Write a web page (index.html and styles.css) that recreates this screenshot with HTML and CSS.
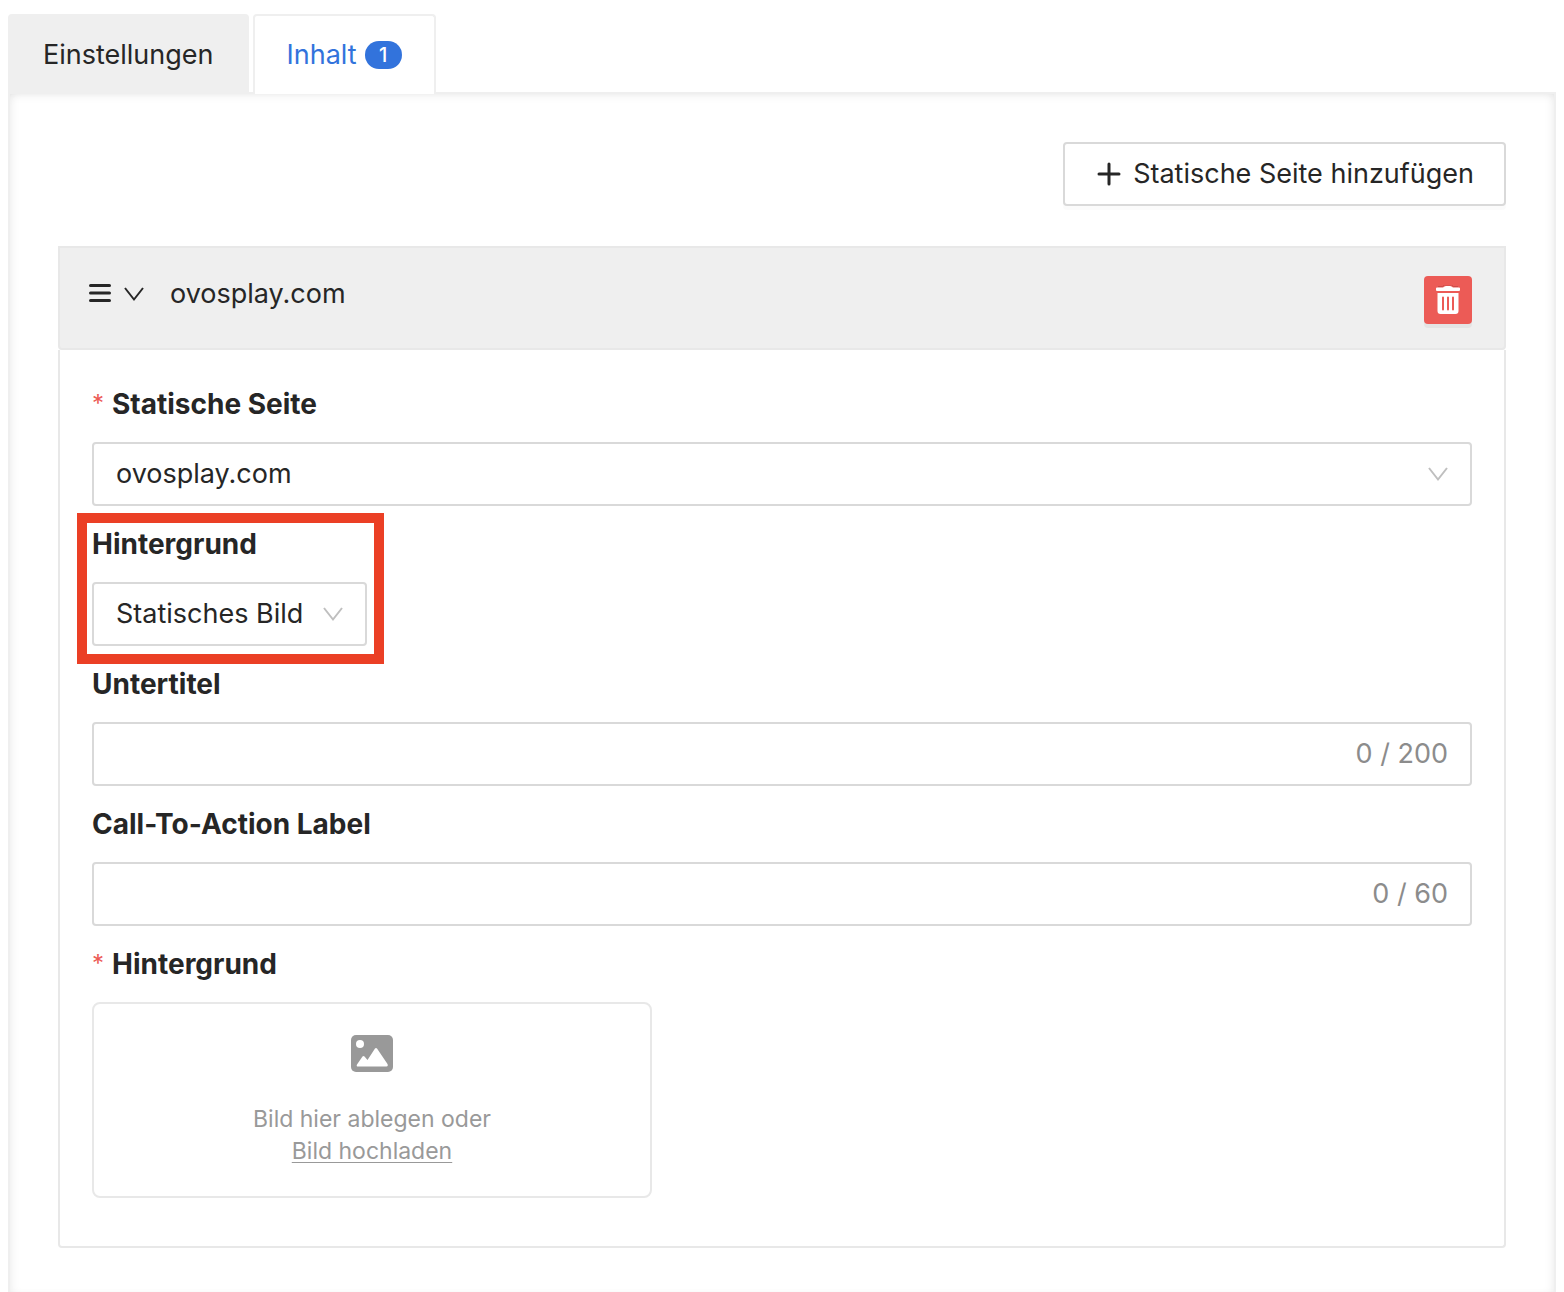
FILE: index.html
```html
<!DOCTYPE html>
<html lang="de">
<head>
  <meta charset="utf-8">
  <meta name="viewport" content="width=device-width, initial-scale=1">
  <title>Inhalt</title>
  <link rel="stylesheet" href="styles.css">
</head>
<body>
  <div class="tabs" role="tablist">
    <button class="tab" type="button" role="tab" aria-selected="false">Einstellungen</button>
    <button class="tab tab-active" type="button" role="tab" aria-selected="true">Inhalt <span class="count">1</span></button>
  </div>

  <main class="panel">
    <div class="toolbar">
      <button class="add-button" type="button">
        <svg class="icon-plus" viewBox="0 0 24 24" aria-hidden="true"><path d="M12 2v20M2 12h20"/></svg>
        Statische Seite hinzufügen
      </button>
    </div>

    <section class="card">
      <header class="card-header">
        <button class="icon-button" type="button" aria-label="Verschieben">
          <svg class="icon-menu" viewBox="0 0 24 24" aria-hidden="true"><path d="M2.500 3.500h19M2.500 11h19M2.500 18.500h19"/></svg>
        </button>
        <button class="icon-button" type="button" aria-label="Einklappen">
          <svg class="icon-chevron" viewBox="0 0 20 20" aria-hidden="true"><path d="M1 4l9 11.500L19 4"/></svg>
        </button>
        <span class="card-title">ovosplay.com</span>
        <button class="delete-button" type="button" aria-label="Löschen">
          <svg class="icon-trash" viewBox="0 0 24 30" aria-hidden="true">
            <path class="lid-shade" d="M2 1.500h4.500L8.500 0h7l2 1.500H22"/>
            <path fill="#fff" d="M1 2.500h6l1.500-1Q9 1 10 1h4q1 0 1.500.5l1.500 1h6q1 0 1 1V5q0 1-1 1H1Q0 6 0 5V3.500q0-1 1-1zM1.500 8h21v18q0 3-3 3h-15q-3 0-3-3z"/>
            <path class="slots" d="M7 12.500v12M12 12.500v12M17 12.500v12"/>
          </svg>
        </button>
      </header>

      <form class="card-body">
        <div class="field">
          <label class="label required" for="page">Statische Seite</label>
          <div class="select">
            <select class="control" id="page"><option>ovosplay.com</option></select>
            <svg class="icon-chevron select-arrow" viewBox="0 0 20 20" aria-hidden="true"><path d="M1 4l9 11.500L19 4"/></svg>
          </div>
        </div>

        <div class="field field-highlight">
          <label class="label" for="background-type">Hintergrund</label>
          <div class="select">
            <select class="control" id="background-type"><option>Statisches Bild</option></select>
            <svg class="icon-chevron select-arrow" viewBox="0 0 20 20" aria-hidden="true"><path d="M1 4l9 11.500L19 4"/></svg>
          </div>
        </div>

        <div class="field">
          <label class="label" for="subtitle">Untertitel</label>
          <div class="control text-control">
            <input class="text-input" id="subtitle" type="text" maxlength="200">
            <span class="counter">0 / 200</span>
          </div>
        </div>

        <div class="field">
          <label class="label" for="cta">Call-To-Action Label</label>
          <div class="control text-control">
            <input class="text-input" id="cta" type="text" maxlength="60">
            <span class="counter">0 / 60</span>
          </div>
        </div>

        <div class="field">
          <span class="label required">Hintergrund</span>
          <div class="dropzone">
            <svg class="icon-image" viewBox="0 0 42 37" aria-hidden="true">
              <rect width="42" height="37" rx="5" fill="#999"/>
              <circle cx="9" cy="9" r="4" fill="#fff"/>
              <path fill="#fff" d="M6 29.500l5.500-8q1-1 2 0l3 3.500 7.500-11.500q1-1 2 0L36.500 29q.8 2.500-1 2.500H7q-2 0-1-2z"/>
            </svg>
            <p class="dropzone-text">Bild hier ablegen oder<br><a class="upload-link" href="#">Bild hochladen</a></p>
          </div>
        </div>
      </form>
    </section>
  </main>
</body>
</html>
```

FILE: styles.css
```css
* {
  box-sizing: border-box;
}

body {
  display: flex;
  flex-direction: column;
  min-height: 100vh;
  margin: 0;
  padding: 14px 8px 0;
  background: #fff;
  color: #262626;
  font: 27px/44px Inter, "Liberation Sans", sans-serif;
}

button,
input,
select {
  margin: 0;
  color: inherit;
  font: inherit;
}

/* Tabs */

.tabs {
  display: flex;
  gap: 4px;
}

.tab {
  height: 80px;
  margin-bottom: -2px;
  padding: 0 33px;
  border: 2px solid #efefef;
  border-bottom: 0;
  border-radius: 4px 4px 0 0;
  background: #efefef;
}

.tab-active {
  z-index: 1;
  display: flex;
  align-items: center;
  gap: 8px;
  padding: 0 32px;
  background: #fff;
  color: #3273dc;
}

.count {
  width: 37px;
  border-radius: 14px;
  background: #3273dc;
  color: #fff;
  font-size: 20px;
  font-weight: 500;
  line-height: 28px;
  text-align: center;
}

/* Panel */

.panel {
  flex: 1;
  padding: 48px 48px 42px;
  border: 2px solid #efefef;
  border-bottom: 0;
  box-shadow: inset 0 6px 10px -4px rgba(0, 0, 0, 0.06), inset 6px 0 10px -4px rgba(0, 0, 0, 0.06), inset -6px 0 10px -4px rgba(0, 0, 0, 0.06);
}

.toolbar {
  display: flex;
  justify-content: flex-end;
  margin-bottom: 40px;
}

.add-button {
  display: flex;
  align-items: center;
  gap: 12px;
  height: 64px;
  padding: 0 30px 0 32px;
  border: 2px solid #d9d9d9;
  border-radius: 4px;
  background: #fff;
  box-shadow: 0 4px 0 rgba(0, 0, 0, 0.016);
}

.icon-plus {
  width: 24px;
  height: 24px;
  fill: none;
  stroke: currentColor;
  stroke-width: 3;
  stroke-linecap: round;
}

/* Card */

.card-header {
  display: flex;
  align-items: flex-start;
  height: 104px;
  padding: 24px 32px 24px 28px;
  border: 2px solid #e8e8e8;
  border-radius: 0 0 4px 4px;
  background: #efefef;
}

.icon-button {
  display: flex;
  align-items: center;
  height: 44px;
  margin-right: 12px;
  padding: 0;
  border: 0;
  background: none;
}

.icon-menu {
  width: 24px;
  height: 24px;
  fill: none;
  stroke: currentColor;
  stroke-width: 3;
  stroke-linecap: round;
}

.icon-chevron {
  width: 20px;
  height: 20px;
  fill: none;
  stroke: currentColor;
  stroke-width: 2;
}

.card-title {
  flex: 1;
  margin-left: 14px;
}

.delete-button {
  display: grid;
  place-items: center;
  width: 48px;
  height: 48px;
  margin-top: 4px;
  padding: 0;
  border: 0;
  border-radius: 4px;
  background: #ec5b56;
  box-shadow: 0 4px 0 rgba(0, 0, 0, 0.045);
}

.icon-trash {
  width: 24px;
  height: 30px;
}

.lid-shade {
  fill: none;
  stroke: #c94d49;
  stroke-width: 1;
}

.slots {
  fill: none;
  stroke: #ec5b56;
  stroke-width: 2;
  stroke-linecap: round;
}

.card-body {
  padding: 16px 32px 48px;
  border: 2px solid #e8e8e8;
  border-top: 0;
  border-radius: 0 0 4px 4px;
}

/* Form fields */

.label {
  display: flex;
  gap: 8px;
  padding: 16px 0;
  font-size: 28px;
  font-weight: 700;
}

.required::before {
  content: "*";
  color: #ec5b56;
  font-size: 24px;
  font-weight: 400;
}

.control {
  width: 100%;
  height: 64px;
  padding: 0 22px;
  border: 2px solid #d9d9d9;
  border-radius: 4px;
  background: #fff;
}

.select {
  position: relative;
}

.select .control {
  padding-right: 61px;
  appearance: none;
}

.select-arrow {
  position: absolute;
  top: 22px;
  right: 24px;
  color: #bfbfbf;
  pointer-events: none;
}

.field-highlight {
  position: relative;
  width: fit-content;
}

.field-highlight::after {
  content: "";
  position: absolute;
  inset: 7px -17px -18px -15px;
  border: 10px solid #eb3f25;
  pointer-events: none;
}

.text-control {
  display: flex;
  align-items: center;
}

.text-input {
  flex: 1;
  min-width: 0;
  padding: 0;
  border: 0;
  outline: 0;
  background: none;
}

.counter {
  color: #8c8c8c;
}

.dropzone {
  display: flex;
  flex-direction: column;
  align-items: center;
  gap: 31px;
  max-width: 560px;
  padding: 31px 24px 29px;
  border: 2px solid #e8e8e8;
  border-radius: 8px;
  color: #999;
}

.icon-image {
  width: 42px;
  height: 37px;
}

.dropzone-text {
  margin: 0;
  font-size: 23px;
  line-height: 32px;
  text-align: center;
}

.upload-link {
  color: inherit;
  text-decoration-thickness: 1px;
  text-underline-offset: 3px;
}
```
